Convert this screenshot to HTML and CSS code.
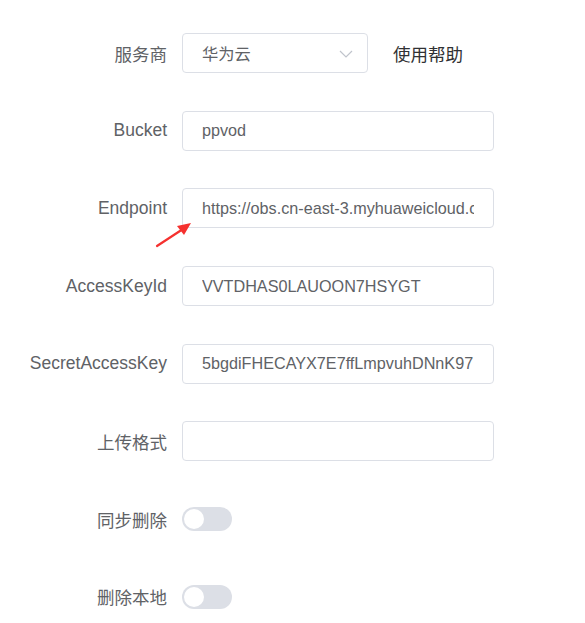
FILE: index.html
```html
<!DOCTYPE html>
<html lang="zh-CN">

<head>
  <meta charset="UTF-8">
  <meta name="viewport" content="width=device-width, initial-scale=1.0">
  <title>存储设置</title>
  <link rel="stylesheet" href="styles.css">
</head>

<body>
  <form class="form">
    <div class="form-item">
      <label class="form-label">服务商</label>
      <div class="form-content">
        <div class="select">
          <span>华为云</span>
          <svg class="select-arrow" width="14" height="8" viewBox="0 0 14 8">
            <polyline points="1,1 7,7 13,1" fill="none" stroke="#c0c4cc" stroke-width="1.2"/>
          </svg>
        </div>
        <a class="help-link">使用帮助</a>
      </div>
    </div>

    <div class="form-item">
      <label class="form-label">Bucket</label>
      <div class="form-content">
        <input class="input" type="text" value="ppvod">
      </div>
    </div>

    <div class="form-item">
      <label class="form-label">Endpoint</label>
      <div class="form-content">
        <input class="input" type="text" value="https://obs.cn-east-3.myhuaweicloud.com">
        <!-- annotation arrow pointing at the field -->
        <svg class="mark-arrow" width="40" height="30" viewBox="0 0 40 30">
          <line x1="2" y1="27" x2="28" y2="10" stroke="#f5312f" stroke-width="2.2" stroke-linecap="round"/>
          <polygon points="36,4 22,7 29,16" fill="#f5312f"/>
        </svg>
      </div>
    </div>

    <div class="form-item">
      <label class="form-label">AccessKeyId</label>
      <div class="form-content">
        <input class="input" type="text" value="VVTDHAS0LAUOON7HSYGT">
      </div>
    </div>

    <div class="form-item">
      <label class="form-label">SecretAccessKey</label>
      <div class="form-content">
        <input class="input" type="text" value="5bgdiFHECAYX7E7ffLmpvuhDNnK97">
      </div>
    </div>

    <div class="form-item">
      <label class="form-label">上传格式</label>
      <div class="form-content">
        <input class="input" type="text" value="">
      </div>
    </div>

    <div class="form-item">
      <label class="form-label">同步删除</label>
      <div class="form-content">
        <span class="switch"><span class="switch-knob"></span></span>
      </div>
    </div>

    <div class="form-item">
      <label class="form-label">删除本地</label>
      <div class="form-content">
        <span class="switch"><span class="switch-knob"></span></span>
      </div>
    </div>
  </form>
</body>

</html>
```

FILE: styles.css
```css
body {
  margin: 0;
  font-family: "Liberation Sans", "Noto Sans CJK SC", sans-serif;
  background: #fff;
}

.form {
  padding-top: 33px;
}

.form-item {
  display: flex;
  align-items: center;
  height: 40px;
  margin-bottom: 37.7px;
}

.form-item:last-child {
  margin-bottom: 0;
}

.form-label {
  width: 167px;
  padding-right: 15px;
  text-align: right;
  font-size: 17.5px;
  color: #606266;
}

.form-content {
  position: relative;
  display: flex;
  align-items: center;
}

.input {
  box-sizing: border-box;
  width: 312px;
  height: 40px;
  padding: 0 19px;
  border: 1px solid #dcdfe6;
  border-radius: 4px;
  font-family: inherit;
  font-size: 16.2px;
  color: #606266;
  outline: none;
}

.select {
  box-sizing: border-box;
  display: flex;
  align-items: center;
  justify-content: space-between;
  width: 186px;
  height: 40px;
  padding: 0 14px 0 19px;
  border: 1px solid #dcdfe6;
  border-radius: 4px;
  font-size: 16.3px;
  color: #606266;
}

.select-arrow {
  margin-top: 2px;
}

.help-link {
  margin-left: 25px;
  font-size: 17.5px;
  color: #303133;
}

.mark-arrow {
  position: absolute;
  left: -27px;
  top: 31px;
}

.switch {
  display: inline-block;
  position: relative;
  width: 50px;
  height: 24px;
  border-radius: 12px;
  background: #dcdfe6;
}

.switch-knob {
  position: absolute;
  top: 2px;
  left: 2px;
  width: 20px;
  height: 20px;
  border-radius: 50%;
  background: #fff;
}
```
